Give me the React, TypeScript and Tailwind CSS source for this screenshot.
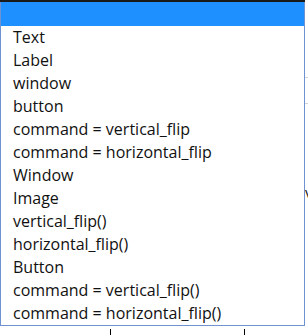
const items = [
  "Text",
  "Label",
  "window",
  "button",
  "command = vertical_flip",
  "command = horizontal_flip",
  "Window",
  "Image",
  "vertical_flip()",
  "horizontal_flip()",
  "Button",
  "command = vertical_flip()",
  "command = horizontal_flip()",
];

export default function App() {
  return (
    <div className="flex w-[308px] h-[335px] overflow-hidden bg-white font-['Open_Sans',sans-serif]">
      <div className="flex w-[305px] shrink-0 flex-col">
        {/* dropdown list */}
        <div className="border-t-2 border-[#1a1a1a] bg-white">
          <div className="border-x border-b border-[#6f92d2]">
            <div className="h-[24px] bg-[#1e90ff]" />
            <ul className="flex flex-col">
              {items.map((item, i) => (
                <li key={i} className="pl-[12px] text-[16px] leading-[23px] text-[#111] whitespace-nowrap">
                  {item}
                </li>
              ))}
            </ul>
          </div>
        </div>
        {/* ticks of the chart behind */}
        <div className="flex gap-[133px] pl-[110px] pt-[3px]">
          <div className="h-[8px] w-px bg-black" />
          <div className="h-[8px] w-px bg-black" />
        </div>
      </div>
      {/* content peeking out on the right */}
      <div className="flex w-[3px] shrink-0 flex-col gap-[25px] pt-[77px]">
        <div className="h-px bg-[#d4d4d4]" />
        <div className="h-px bg-[#d4d4d4]" />
        <div className="mt-[52px] text-[15px] leading-[23px] text-[#222]">v</div>
      </div>
    </div>
  );
}
